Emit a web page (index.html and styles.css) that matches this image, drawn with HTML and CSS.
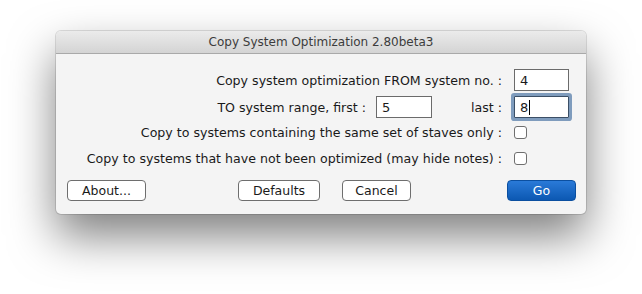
FILE: index.html
```html
<!DOCTYPE html>
<html lang="en">
<head>
  <meta charset="UTF-8">
  <title>Copy System Optimization</title>
  <link rel="stylesheet" href="styles.css">
</head>
<body>
  <div class="window">
    <div class="titlebar">Copy System Optimization 2.80beta3</div>
    <div class="content">
      <div class="row row-from">
        <span class="label">Copy system optimization FROM system no. :</span>
        <div class="field">4</div>
      </div>
      <div class="row row-to">
        <span class="label">TO system range, first :</span>
        <div class="field field-first">5</div>
        <span class="label label-last">last :</span>
        <div class="field field-focus">8<span class="caret"></span></div>
      </div>
      <div class="row row-check">
        <span class="label">Copy to systems containing the same set of staves only :</span>
        <div class="checkbox"></div>
      </div>
      <div class="row row-check">
        <span class="label">Copy to systems that have not been optimized (may hide notes) :</span>
        <div class="checkbox"></div>
      </div>
      <div class="buttons">
        <button class="btn btn-about">About...</button>
        <button class="btn btn-defaults">Defaults</button>
        <button class="btn btn-cancel">Cancel</button>
        <button class="btn btn-go">Go</button>
      </div>
    </div>
  </div>
</body>
</html>
```

FILE: styles.css
```css
html, body {
  margin: 0;
  padding: 0;
  min-height: 294px;
  background-color: #ffffff;
}
body {
  font-family: "DejaVu Sans", "Liberation Sans", sans-serif;
  font-size: 12.6px;
  color: #1a1a1a;
  overflow: hidden;
  padding-top: 31px;
  box-sizing: border-box;
}
.window {
  width: 530px;
  height: 183px;
  margin-left: 56px;
  background: #f4f4f4;
  border-radius: 5px;
  box-shadow: 0 0 0 1px rgba(0, 0, 0, 0.12), 0 22px 46px rgba(0, 0, 0, 0.5);
  overflow: hidden;
}
.titlebar {
  height: 22px;
  line-height: 22px;
  text-align: center;
  background: linear-gradient(#ebebeb, #d4d4d4);
  border-bottom: 1px solid #a9a9a9;
  color: #3c3c3c;
  font-size: 12px;
}
.content {
  padding: 15px 17px 0 11px;
}
.row {
  display: flex;
  justify-content: flex-end;
  align-items: center;
}
.row-from {
  height: 22px;
}
.row-to {
  height: 24px;
  margin-top: 4px;
}
.row-check {
  height: 13px;
  margin-top: 7px;
}
.row-check + .row-check {
  margin-top: 13px;
}
.label {
  margin-right: 12px;
}
.label-last {
  margin-left: 39px;
}
.field {
  box-sizing: border-box;
  width: 55px;
  height: 22px;
  padding: 2px 0 0 5px;
  background: #ffffff;
  border: 1px solid #6b6b6b;
  font-size: 13px;
  line-height: 17px;
}
.field-first {
  width: 56px;
}
.label + .field-first {
  margin-left: -2px;
}
.field-focus {
  border-color: #3b4f66;
  box-shadow: 0 0 0 3px #7f9cbd;
  border-radius: 1px;
}
.caret {
  display: inline-block;
  width: 1px;
  height: 15px;
  background: #000000;
  vertical-align: -3px;
  margin-left: 1px;
}
.checkbox {
  box-sizing: border-box;
  width: 13px;
  height: 13px;
  border: 1px solid #6f6f6f;
  border-radius: 3px;
  background: #ffffff;
  margin-right: 42px;
}
.buttons {
  display: flex;
  align-items: center;
  margin-top: 15px;
  margin-right: -7px;
}
.btn {
  box-sizing: border-box;
  height: 21px;
  padding: 0;
  background: #ffffff;
  border: 1px solid #6e6e6e;
  border-radius: 4px;
  font-family: "DejaVu Sans", "Liberation Sans", sans-serif;
  font-size: 12.5px;
  color: #1a1a1a;
}
.btn-about {
  width: 79px;
}
.btn-defaults {
  width: 82px;
  margin-left: 92px;
}
.btn-cancel {
  width: 69px;
  margin-left: 22px;
}
.btn-go {
  width: 69px;
  margin-left: auto;
  border: 1px solid #0b4fa0;
  background: linear-gradient(#2a7ad8, #0c58b2);
  color: #ffffff;
}
```
